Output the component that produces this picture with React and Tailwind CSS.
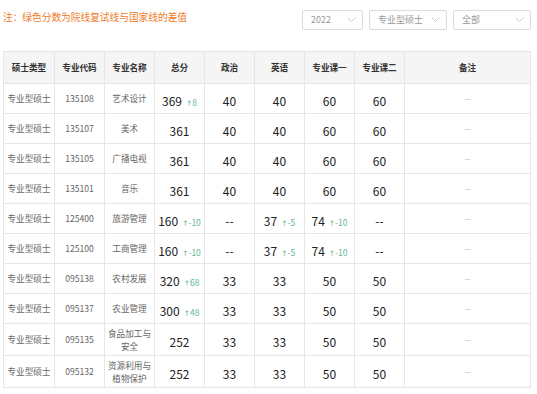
const rows = [
  { code: '135108', name: ['艺术设计'], total: '369', totalDiff: '8', pol: '40', eng: '40', c1: '60', c2: '60' },
  { code: '135107', name: ['美术'], total: '361', pol: '40', eng: '40', c1: '60', c2: '60' },
  { code: '135105', name: ['广播电视'], total: '361', pol: '40', eng: '40', c1: '60', c2: '60' },
  { code: '135101', name: ['音乐'], total: '361', pol: '40', eng: '40', c1: '60', c2: '60' },
  { code: '125400', name: ['旅游管理'], total: '160', totalDiff: '-10', pol: '--', eng: '37', engDiff: '-5', c1: '74', c1Diff: '-10', c2: '--' },
  { code: '125100', name: ['工商管理'], total: '160', totalDiff: '-10', pol: '--', eng: '37', engDiff: '-5', c1: '74', c1Diff: '-10', c2: '--' },
  { code: '095138', name: ['农村发展'], total: '320', totalDiff: '68', pol: '33', eng: '33', c1: '50', c2: '50' },
  { code: '095137', name: ['农业管理'], total: '300', totalDiff: '48', pol: '33', eng: '33', c1: '50', c2: '50' },
  { code: '095135', name: ['食品加工与', '安全'], total: '252', pol: '33', eng: '33', c1: '50', c2: '50' },
  { code: '095132', name: ['资源利用与', '植物保护'], total: '252', pol: '33', eng: '33', c1: '50', c2: '50' },
]

const headers = ['硕士类型', '专业代码', '专业名称', '总分', '政治', '英语', '专业课一', '专业课二', '备注']
const widths = ['w-[51px]', 'w-[50px]', 'w-[50px]', 'w-[50px]', 'w-[50px]', 'w-[50px]', 'w-[50px]', 'w-[50px]', 'w-[126px]']

function Chevron() {
  return (
    <svg width="9" height="5" viewBox="0 0 9 5" className="shrink-0">
      <path d="M0.5 0.5 L4.5 4.5 L8.5 0.5" fill="none" stroke="#c4c4c4" strokeWidth="0.9" />
    </svg>
  )
}

function Select({ label, width }) {
  return (
    <div className={`${width} h-[20px] border border-[#dcdcdc] rounded-[2px] flex items-center justify-between pl-[8px] pr-[6px] text-[9px] text-[#999]`}>
      <span>{label}</span>
      <Chevron />
    </div>
  )
}

function Score({ value, diff }) {
  return (
    <span className="inline-flex items-baseline justify-center">
      <span className="text-[12px] text-[#222]">{value}</span>
      {diff && (
        <span className="ml-[4px] text-[8.5px] text-[#5fb896]">
          <span style={{ fontFamily: '"DejaVu Sans", sans-serif' }} className="text-[7.5px]">↑</span>
          {diff}
        </span>
      )}
    </span>
  )
}

export default function App() {
  return (
    <div
      className="w-[537px] h-[394px] bg-white overflow-hidden"
      style={{ fontFamily: '"Noto Sans CJK SC", "Open Sans", sans-serif' }}
    >
      <div className="flex items-center justify-between pl-[3px] pr-[6px] pt-[9px] h-[30px]">
        <p className="text-[9.7px] text-[#f07a1f] leading-none -mt-[4px]">注：绿色分数为院线复试线与国家线的差值</p>
        <div className="flex gap-[6px]">
          <Select label="2022" width="w-[61px]" />
          <Select label="专业型硕士" width="w-[78px]" />
          <Select label="全部" width="w-[78px]" />
        </div>
      </div>

      <table className="ml-[3px] mt-[21px] border-collapse table-fixed w-[527px]">
        <thead>
          <tr className="h-[32px] bg-[#f5f5f5]">
            {headers.map((h, i) => (
              <th key={h} className={`${widths[i]} border border-[#e6e6e6] text-[8.6px] font-bold text-[#333] text-center p-0`}>
                {h}
              </th>
            ))}
          </tr>
        </thead>
        <tbody>
          {rows.map(r => (
            <tr key={r.code} className={r.name.length > 1 ? 'h-[32px]' : 'h-[30px]'}>
              <td className="border border-[#e6e6e6] text-center text-[8.6px] text-[#666] p-0">专业型硕士</td>
              <td className="border border-[#e6e6e6] text-center text-[8.6px] text-[#666] p-0">{r.code}</td>
              <td className="border border-[#e6e6e6] text-center text-[8.6px] text-[#666] p-0 leading-[13px]">
                {r.name.map(n => (
                  <div key={n}>{n}</div>
                ))}
              </td>
              <td className="border border-[#e6e6e6] text-center p-0">
                <Score value={r.total} diff={r.totalDiff} />
              </td>
              <td className="border border-[#e6e6e6] text-center p-0">
                <Score value={r.pol} />
              </td>
              <td className="border border-[#e6e6e6] text-center p-0">
                <Score value={r.eng} diff={r.engDiff} />
              </td>
              <td className="border border-[#e6e6e6] text-center p-0">
                <Score value={r.c1} diff={r.c1Diff} />
              </td>
              <td className="border border-[#e6e6e6] text-center p-0">
                <Score value={r.c2} />
              </td>
              <td className="border border-[#e6e6e6] text-center text-[8px] text-[#aaa] p-0">--</td>
            </tr>
          ))}
        </tbody>
      </table>
    </div>
  )
}
